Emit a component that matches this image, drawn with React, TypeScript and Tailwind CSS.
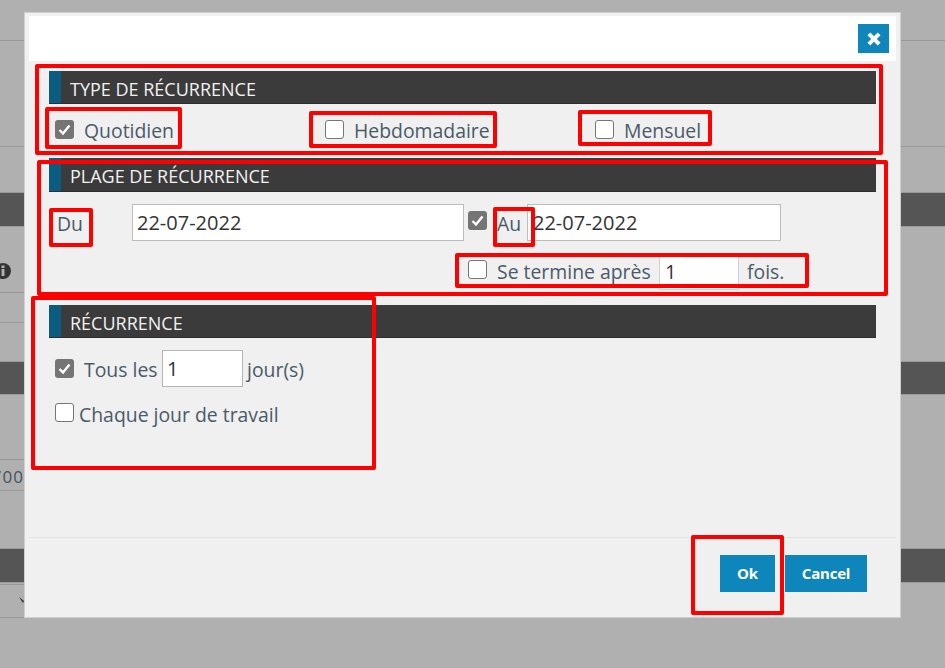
import React from "react";

const font = { fontFamily: '"Open Sans", sans-serif' };

function Check({ on, c = "" }: { on?: boolean; c?: string }) {
  return on ? (
    <span className={`w-[19px] h-[19px] rounded-[3px] bg-[#757575] flex items-center justify-center shrink-0 ${c}`}>
      <svg width="15" height="15" viewBox="0 0 15 15"><path d="M2.5 8 L6 11.5 L12.5 3.5" fill="none" stroke="#fff" strokeWidth="2.4" /></svg>
    </span>
  ) : (
    <span className={`w-[19px] h-[19px] rounded-[3px] bg-white border border-[#767676] shrink-0 ${c}`} />
  );
}

function Bar({ title, c = "h-[33px]" }: { title: string; c?: string }) {
  return (
    <div className={`${c} mx-[25px] flex bg-[#3b3b3b] border-b border-[#2e2e2e]`}>
      <div className="w-[12px] bg-[#0b5c80]" />
      <div className="pl-[9px] text-[18px] leading-[36px] text-[#f2f2f2] whitespace-nowrap">{title}</div>
    </div>
  );
}

function RedBox({ c }: { c: string }) {
  return <div className={`absolute border-[4px] border-[#ff0000] rounded-[2px] ${c}`} />;
}

const dark = "bg-[#555555] border-y border-[#999]";

function RightCol() {
  return (
    <div className="flex-1 flex flex-col">
      <div className="h-[41px] border-b border-[#999]" />
      <div className="h-[106px] border-b border-[#999]" />
      <div className="h-[45px]" />
      <div className={`h-[35px] ${dark}`} />
      <div className="h-[134px]" />
      <div className={`h-[34px] ${dark}`} />
      <div className="h-[153px]" />
      <div className={`h-[35px] ${dark}`} />
    </div>
  );
}

function LeftCol() {
  return (
    <div className="w-[24px] flex flex-col">
      <div className="h-[41px] border-b border-[#999]" />
      <div className="h-[106px] border-b border-[#999]" />
      <div className="h-[45px]" />
      <div className={`h-[35px] ${dark}`} />
      <div className="h-[66px] border-b border-[#999] relative">
        <svg className="absolute left-0 top-[36px]" width="12" height="16" viewBox="0 0 12 16"><circle cx="3" cy="8" r="8" fill="#333" /><rect x="1.5" y="6" width="3" height="7" fill="#b0b0b0" /><rect x="1.5" y="2.5" width="3" height="2.5" fill="#b0b0b0" /></svg>
      </div>
      <div className="h-[30px] border-b border-[#999]" />
      <div className="h-[38px]" />
      <div className={`h-[34px] ${dark}`} />
      <div className="h-[65px] border-b border-[#999]" />
      <div className="h-[31px] border-b border-[#999] flex justify-end overflow-hidden">
        <span className="text-[17px] leading-[34px] tracking-[1px] text-[#46525e]">700</span>
      </div>
      <div className="h-[57px]" />
      <div className={`h-[35px] ${dark}`} />
      <div className="h-[2px] border-b border-[#999]" />
      <div className="h-[33px] border-b border-[#999] relative">
        <svg className="absolute left-[19px] top-[12px]" width="5" height="6" viewBox="0 0 5 6"><path d="M0 0 L5 4 L4 6 Z" fill="#333" /></svg>
      </div>
    </div>
  );
}

export default function App() {
  return (
    <div className="relative w-[945px] h-[668px] overflow-hidden bg-[#b0b0b0] text-[#4a5a68] text-[19.4px]" style={font}>
      <div className="flex h-full">
        <LeftCol />
        <div className="w-[877px]" />
        <RightCol />
      </div>

      <div className="absolute left-[24px] top-[12px] w-[877px] h-[606px] bg-[#f0f0f0] shadow-[inset_0_0_0_1px_#cfcfcf] flex flex-col">
        <div className="mx-[5px] mt-[4px] h-[45px] bg-white flex justify-end items-start pt-[8px] pr-[7px] shrink-0">
          <button className="w-[31px] h-[29px] bg-[#0e86bb] flex items-center justify-center">
            <svg width="16" height="16" viewBox="0 0 14 14"><path d="M2.5 2.5 L11.5 11.5 M11.5 2.5 L2.5 11.5" stroke="#fff" strokeWidth="3.6" /></svg>
          </button>
        </div>

        <div className="mt-[10px]"><Bar title="TYPE DE RÉCURRENCE" /></div>
        <div className="h-[54px] flex items-center shrink-0">
          <div className="w-[260px] pl-[31px] flex items-center gap-[10px]"><Check on c="-mt-[3px]" /><span>Quotidien</span></div>
          <div className="w-[270px] pl-[41px] flex items-center gap-[10px]"><Check c="-mt-[3px]" /><span>Hebdomadaire</span></div>
          <div className="pl-[41px] flex items-center gap-[10px]"><Check c="-mt-[3px]" /><span>Mensuel</span></div>
        </div>

        <Bar title="PLAGE DE RÉCURRENCE" c="h-[34px]" />
        <div className="h-[37px] mt-[12px] flex items-center pl-[33px] shrink-0">
          <span className="w-[75px] pt-[3px]">Du</span>
          <div className="w-[332px] h-[37px] bg-white border border-[#bdbdbd] flex items-center pl-[4px] text-[20px] text-[#333]">22-07-2022</div>
          <Check on c="ml-[4px] -mt-[4px]" />
          <span className="ml-[10px] w-[30px] pt-[3px]">Au</span>
          <div className="w-[254px] h-[37px] bg-white border border-[#bdbdbd] flex items-center pl-[5px] text-[20px] text-[#333]">22-07-2022</div>
        </div>
        <div className="h-[37px] mt-[12px] flex items-center pl-[444px] shrink-0">
          <Check c="-mt-[4px]" />
          <span className="ml-[10px] w-[162px] whitespace-nowrap pt-[1px]">Se termine après</span>
          <div className="w-[80px] h-[37px] bg-white border border-[#d0d0d0] flex items-center pl-[5px] text-[20px] text-[#333]">1</div>
          <span className="ml-[8px] pt-[1px]">fois.</span>
        </div>

        <div className="mt-[15px]"><Bar title="RÉCURRENCE" /></div>
        <div className="mt-[12px] pl-[31px] flex items-center h-[37px] shrink-0">
          <Check on c="-mt-[1px]" />
          <span className="ml-[10px] w-[78px] pt-[3px]">Tous les</span>
          <div className="w-[81px] h-[37px] bg-white border border-[#b5b5b5] flex items-center pl-[4px] text-[20px] text-[#333]">1</div>
          <span className="ml-[4px] pt-[3px]">jour(s)</span>
        </div>
        <div className="mt-[14px] h-[24px] pl-[31px] flex items-center gap-[5px] shrink-0"><Check c="-mt-[1px]" /><span className="pt-[3px]">Chaque jour de travail</span></div>

        <div className="mt-auto mx-[5px] h-[81px] border-t border-[#e3e3e3] flex justify-end items-start pt-[17px] pr-[29px] gap-[10px] shrink-0">
          <button className="w-[55px] h-[37px] bg-[#0e86bb] text-white font-bold text-[15px]">Ok</button>
          <button className="w-[82px] h-[37px] bg-[#0e86bb] text-white font-bold text-[15px] tracking-[-0.2px]">Cancel</button>
        </div>
      </div>

      <RedBox c="left-[35px] top-[64px] w-[848px] h-[91px]" />
      <RedBox c="left-[45px] top-[107px] w-[137px] h-[42px]" />
      <RedBox c="left-[309px] top-[111px] w-[188px] h-[37px]" />
      <RedBox c="left-[578px] top-[110px] w-[134px] h-[36px]" />
      <RedBox c="left-[37px] top-[160px] w-[851px] h-[136px]" />
      <RedBox c="left-[49px] top-[208px] w-[44px] h-[39px]" />
      <RedBox c="left-[493px] top-[207px] w-[42px] h-[40px]" />
      <RedBox c="left-[455px] top-[253px] w-[354px] h-[35px]" />
      <RedBox c="left-[31px] top-[296px] w-[345px] h-[174px]" />
      <RedBox c="left-[691px] top-[535px] w-[93px] h-[80px]" />
    </div>
  );
}
